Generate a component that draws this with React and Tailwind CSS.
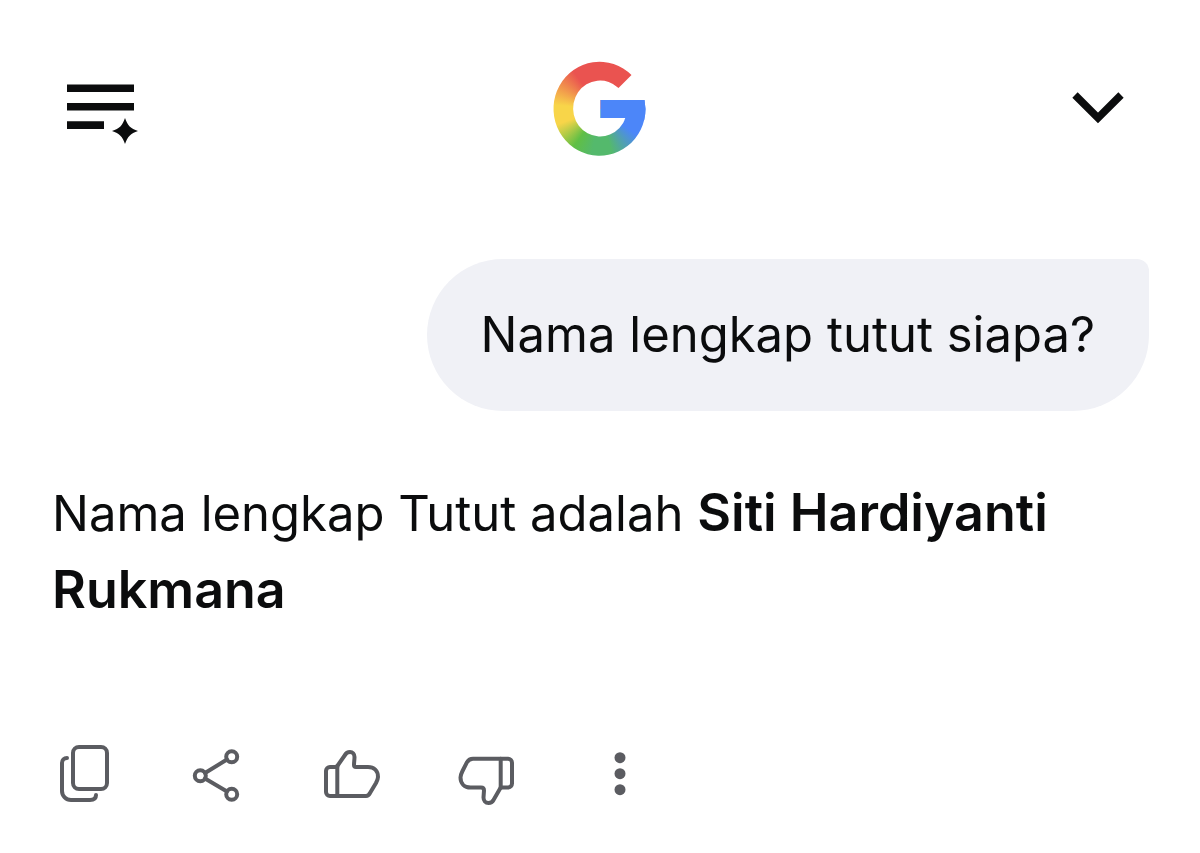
import React from "react";

const MenuIcon = () => (
    <svg viewBox="0 0 96 96" className="w-24 h-24" fill="currentColor" aria-hidden="true">
        <path d="M15 24.500h67V32H15zM15 43h67v7.500H15zM15 61.300h37V69H15z" />
        <path d="M73 58c2.500 7.500 5.500 10.500 13 13-7.500 2.500-10.500 5.500-13 13-2.500-7.500-5.500-10.500-13-13 7.500-2.500 10.500-5.500 13-13z" />
    </svg>
);

const ChevronIcon = () => (
    <svg viewBox="0 0 96 96" className="w-24 h-24" fill="none" stroke="currentColor" strokeWidth="7.500" aria-hidden="true">
        <path d="M22 35l23 23 23-23" />
    </svg>
);

const GoogleLogo = () => (
    <div
        role="img"
        aria-label="Google"
        className="w-24 h-24 pt-9 pl-11 bg-[conic-gradient(from_0deg_at_47px_49px,#ea5350_0deg,#ea5350_50deg,#4c86f9_75deg,#4c86f9_125deg,#54b96c_165deg,#54b96c_190deg,#60bf45_215deg,#f8d549_250deg,#f8d549_275deg,#ea5350_325deg,#ea5350_360deg)] [clip-path:path('M79_15A46_47_0_1_0_93_49L92_40L48_40V58H73A27_28_0_1_1_66_28Z')]"
    >
        <div className="h-6 bg-[#4c86f9]"></div>
    </div>
);

const actions = [
    {
        label: "Salin",
        icon: (
            <>
                <rect x="21" y="5" width="34" height="42" rx="6" />
                <path d="M15 16c-3 0-5 2-5 5v28a9 9 0 0 0 9 9h19c4 0 6-2 6-5" />
            </>
        ),
    },
    {
        label: "Bagikan",
        icon: (
            <>
                <circle cx="45.700" cy="14.700" r="5.500" />
                <circle cx="14.300" cy="33.700" r="5.500" />
                <circle cx="45.700" cy="52.300" r="5.500" />
                <path d="M19 31l22-13.500M19 36.500l22 13" />
            </>
        ),
    },
    {
        label: "Suka",
        icon: (
            <>
                <path d="M17.300 25H10a4 4 0 0 0-4 4v21a4 4 0 0 0 4 4h36c2 0 3-1 4-3l6-10c1-2 2-4 2-6 0-6-4-10-10-10H36c-1.500 0-2-.5-2-2 0-3 .5-5 .5-8 0-3-2-5-4.500-5-2 0-4 1-5 3L17.300 24z" />
                <path d="M17.300 24v30" />
            </>
        ),
    },
    {
        label: "Tidak suka",
        icon: (
            <>
                <path d="M46.700 45.500H54a4 4 0 0 0 4-4V20.700a4 4 0 0 0-4-4H19c-3 0-4.500 1-6 3.500L8.500 29c-1 2-2 4-2 6.500 0 6 4 10 10 10H27c2 0 3 1 3 3l-.5 7c0 3 2 5.500 5 5.500 2 0 4-1 5-3l7.200-12.500z" />
                <path d="M46.700 16.700v29" />
            </>
        ),
    },
    {
        label: "Lainnya",
        icon: (
            <g fill="currentColor" stroke="none">
                <circle cx="32" cy="15.700" r="5.500" />
                <circle cx="32" cy="31.700" r="5.500" />
                <circle cx="32" cy="47.700" r="5.500" />
            </g>
        ),
    },
];

const Header = () => (
    <header className="flex items-center justify-between">
        <button type="button" aria-label="Menu">
            <MenuIcon />
        </button>
        <GoogleLogo />
        <button type="button" aria-label="Tutup">
            <ChevronIcon />
        </button>
    </header>
);

const Actions = () => (
    <div className="flex gap-[70px] mt-[113px] text-[#5b5c61]">
        {actions.map(({ label, icon }) => (
            <button key={label} type="button" aria-label={label}>
                <svg
                    viewBox="0 0 64 64"
                    className="w-16 h-16"
                    fill="none"
                    stroke="currentColor"
                    strokeWidth="4"
                    strokeLinecap="round"
                    strokeLinejoin="round"
                    aria-hidden="true"
                >
                    {icon}
                </svg>
            </button>
        ))}
    </div>
);

const App = () => {
    return (
        <div className="min-h-screen pl-[52px] pr-[51px] pt-[60px] pb-8 bg-white text-[#0b0c0d] font-['Inter',sans-serif] text-[49px] leading-[76px]">
            <Header />
            <main>
                <div className="flex justify-end mt-[103px]">
                    <p className="px-[54px] py-[38px] bg-[#f0f1f6] rounded-[76px] rounded-tr-xl">
                        Nama lengkap tutut siapa?
                    </p>
                </div>
                <p className="mt-16">
                    Nama lengkap Tutut adalah{" "}
                    <strong className="text-[52px] leading-[76px] font-semibold">Siti Hardiyanti Rukmana</strong>
                </p>
                <Actions />
            </main>
        </div>
    );
};

export default App;
